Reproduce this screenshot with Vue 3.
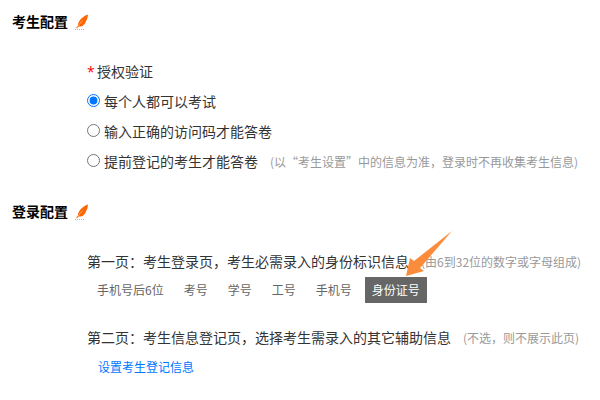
<template>
  <main class="settings">
    <section>
      <h2 class="heading">
        考生配置
        <svg class="feather" viewBox="0 0 14 18" aria-hidden="true">
          <path d="M13 2.6C9.4 3.8 6 6.2 4.2 9.2C3 11.2 2.8 12.6 3 13.6L1 16L1.8 16.2L3.8 14.6C6.2 14.8 8.6 13.6 10 11.4C11.8 8.4 12.8 5.6 13 2.6Z" fill="#ff6600" />
          <path d="M3.4 14.2C4.4 12 5.8 10.2 7.6 8.6" fill="none" stroke="#ffc9a3" stroke-width="0.6" />
          <path d="M0 17.5H10" stroke="#ff9b5c" stroke-width="1" stroke-dasharray="1 1" />
        </svg>
      </h2>
      <fieldset class="content">
        <legend class="row"><span class="required">*</span>授权验证</legend>
        <div v-for="item in authModes" :key="item.value" class="row">
          <label class="option">
            <input v-model="authMode" type="radio" name="authMode" :value="item.value" />
            {{ item.label }}
          </label>
          <span v-if="item.hint" class="hint">{{ item.hint }}</span>
        </div>
      </fieldset>
    </section>

    <section>
      <h2 class="heading">
        登录配置
        <svg class="feather" viewBox="0 0 14 18" aria-hidden="true">
          <path d="M13 2.6C9.4 3.8 6 6.2 4.2 9.2C3 11.2 2.8 12.6 3 13.6L1 16L1.8 16.2L3.8 14.6C6.2 14.8 8.6 13.6 10 11.4C11.8 8.4 12.8 5.6 13 2.6Z" fill="#ff6600" />
          <path d="M3.4 14.2C4.4 12 5.8 10.2 7.6 8.6" fill="none" stroke="#ffc9a3" stroke-width="0.6" />
          <path d="M0 17.5H10" stroke="#ff9b5c" stroke-width="1" stroke-dasharray="1 1" />
        </svg>
      </h2>
      <div class="content">
        <div class="row">
          第一页：考生登录页，考生必需录入的身份标识信息
          <span class="hint">(由6到32位的数字或字母组成)</span>
        </div>
        <div class="tabs">
          <div v-for="name in idTypes" :key="name" class="tab-item">
            <button
              type="button"
              class="tab"
              :class="{ active: name === idType }"
              :aria-pressed="name === idType"
              @click="idType = name"
            >
              {{ name }}
            </button>
            <svg v-if="name === idType" class="arrow" viewBox="0 0 48 48" aria-hidden="true">
              <path d="M1 46L5 28L9 31L47 1L15 38L19 41Z" fill="#fa8c3c" />
            </svg>
          </div>
        </div>
        <div class="row">
          第二页：考生信息登记页，选择考生需录入的其它辅助信息
          <span class="hint">(不选，则不展示此页)</span>
        </div>
        <div class="row">
          <a href="#" class="link" @click.prevent>设置考生登记信息</a>
        </div>
      </div>
    </section>
  </main>
</template>

<script setup>
import { ref } from 'vue';

const authModes = [
  { value: 'all', label: '每个人都可以考试' },
  { value: 'code', label: '输入正确的访问码才能答卷' },
  {
    value: 'registered',
    label: '提前登记的考生才能答卷',
    hint: '(以“考生设置”中的信息为准，登录时不再收集考生信息)'
  }
];
const authMode = ref('all');

const idTypes = ['手机号后6位', '考号', '学号', '工号', '手机号', '身份证号'];
const idType = ref('身份证号');
</script>

<style>
body {
  margin: 0;
  background: #fff;
}
</style>

<style scoped>
.settings {
  padding: 6px 12px 0;
  font-family: "Noto Sans CJK SC", "Noto Sans", sans-serif;
  font-size: 14px;
  line-height: 30px;
  color: #333;
}

.heading {
  display: flex;
  align-items: center;
  gap: 7px;
  margin: 0;
  font-size: 14px;
  font-weight: bold;
  color: #000;
}

.feather {
  width: 14px;
  height: 18px;
}

.content {
  margin: 20px 0;
  padding: 0 0 0 75px;
  border: 0;
  min-width: 0;
}

.row {
  display: flex;
  align-items: baseline;
  height: 30px;
  padding: 0;
  white-space: nowrap;
}

.required {
  width: 10px;
  font-family: "Open Sans", sans-serif;
  color: #f00;
}

.option {
  display: flex;
  align-items: center;
}

.option input {
  width: 13px;
  height: 13px;
  margin: 0 4px 1px 0;
}

.hint {
  margin-left: 12px;
  font-size: 12px;
  color: #999;
}

.tabs {
  display: flex;
  gap: 6px;
  margin: 1px 0 19px 3px;
}

.tab-item {
  position: relative;
  display: flex;
}

.tab {
  height: 26px;
  padding: 0 7px;
  border: 0;
  background: transparent;
  font-family: inherit;
  font-size: 12px;
  line-height: 26px;
  white-space: nowrap;
  color: #666;
  cursor: pointer;
}

.tab.active {
  background: #666;
  color: #fff;
}

/* pointer over the selected type */
.arrow {
  position: absolute;
  left: 40px;
  top: -47px;
  width: 48px;
  height: 48px;
  pointer-events: none;
}

.link {
  margin-left: 11px;
  font-size: 12px;
  color: #0077ff;
  text-decoration: none;
}
</style>
